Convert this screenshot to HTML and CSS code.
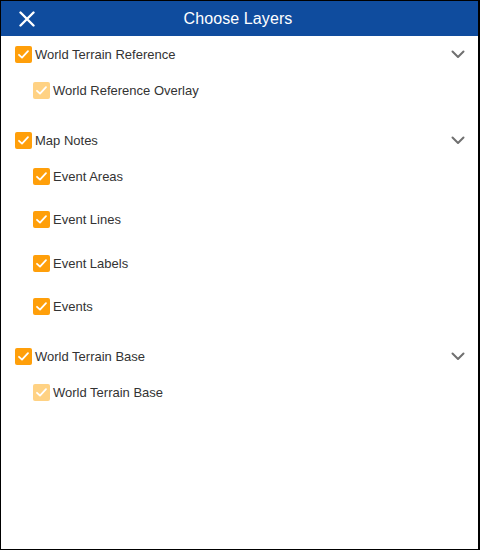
FILE: index.html
```html
<!doctype html>
<html>
	<head>
	<meta charset="utf-8">
	<title>Choose Layers</title>
	<link rel="stylesheet" href="styles.css">
	</head>

	<body>
	<div class="frame">
		<div class="head">
			<div class="head-left">
				<svg class="close" width="16" height="16" viewBox="0 0 16 16"><path d="M1.5 1.5 L14.5 14.5 M14.5 1.5 L1.5 14.5" stroke="#fff" stroke-width="2.4" stroke-linecap="round" fill="none"/></svg>
			</div>
			<div class="title">Choose Layers</div>
			<div></div>
		</div>

		<div class="group">
			<div class="row main">
				<span class="box"><svg width="17" height="17" viewBox="0 0 17 17"><path d="M4 8.8 L7 11.6 L13 5.2" stroke="#fff" stroke-width="1.8" stroke-linecap="round" stroke-linejoin="round" fill="none"/></svg></span>
				<span class="label">World Terrain Reference</span>
				<svg class="chev" width="14" height="9" viewBox="0 0 14 9"><path d="M1.5 1.5 L7 7 L12.5 1.5" stroke="#707070" stroke-width="2" stroke-linecap="round" stroke-linejoin="round" fill="none"/></svg>
			</div>
			<div class="subs">
				<div class="row sub">
					<span class="box light"><svg width="17" height="17" viewBox="0 0 17 17"><path d="M4 8.8 L7 11.6 L13 5.2" stroke="#fff" stroke-width="1.8" stroke-linecap="round" stroke-linejoin="round" fill="none"/></svg></span>
					<span class="label">World Reference Overlay</span>
				</div>
			</div>
		</div>

		<div class="group">
			<div class="row main">
				<span class="box"><svg width="17" height="17" viewBox="0 0 17 17"><path d="M4 8.8 L7 11.6 L13 5.2" stroke="#fff" stroke-width="1.8" stroke-linecap="round" stroke-linejoin="round" fill="none"/></svg></span>
				<span class="label">Map Notes</span>
				<svg class="chev" width="14" height="9" viewBox="0 0 14 9"><path d="M1.5 1.5 L7 7 L12.5 1.5" stroke="#707070" stroke-width="2" stroke-linecap="round" stroke-linejoin="round" fill="none"/></svg>
			</div>
			<div class="subs">
				<div class="row sub">
					<span class="box"><svg width="17" height="17" viewBox="0 0 17 17"><path d="M4 8.8 L7 11.6 L13 5.2" stroke="#fff" stroke-width="1.8" stroke-linecap="round" stroke-linejoin="round" fill="none"/></svg></span>
					<span class="label">Event Areas</span>
				</div>
				<div class="row sub">
					<span class="box"><svg width="17" height="17" viewBox="0 0 17 17"><path d="M4 8.8 L7 11.6 L13 5.2" stroke="#fff" stroke-width="1.8" stroke-linecap="round" stroke-linejoin="round" fill="none"/></svg></span>
					<span class="label">Event Lines</span>
				</div>
				<div class="row sub">
					<span class="box"><svg width="17" height="17" viewBox="0 0 17 17"><path d="M4 8.8 L7 11.6 L13 5.2" stroke="#fff" stroke-width="1.8" stroke-linecap="round" stroke-linejoin="round" fill="none"/></svg></span>
					<span class="label">Event Labels</span>
				</div>
				<div class="row sub">
					<span class="box"><svg width="17" height="17" viewBox="0 0 17 17"><path d="M4 8.8 L7 11.6 L13 5.2" stroke="#fff" stroke-width="1.8" stroke-linecap="round" stroke-linejoin="round" fill="none"/></svg></span>
					<span class="label">Events</span>
				</div>
			</div>
		</div>

		<div class="group">
			<div class="row main">
				<span class="box"><svg width="17" height="17" viewBox="0 0 17 17"><path d="M4 8.8 L7 11.6 L13 5.2" stroke="#fff" stroke-width="1.8" stroke-linecap="round" stroke-linejoin="round" fill="none"/></svg></span>
				<span class="label">World Terrain Base</span>
				<svg class="chev" width="14" height="9" viewBox="0 0 14 9"><path d="M1.5 1.5 L7 7 L12.5 1.5" stroke="#707070" stroke-width="2" stroke-linecap="round" stroke-linejoin="round" fill="none"/></svg>
			</div>
			<div class="subs">
				<div class="row sub">
					<span class="box light"><svg width="17" height="17" viewBox="0 0 17 17"><path d="M4 8.8 L7 11.6 L13 5.2" stroke="#fff" stroke-width="1.8" stroke-linecap="round" stroke-linejoin="round" fill="none"/></svg></span>
					<span class="label">World Terrain Base</span>
				</div>
			</div>
		</div>
	</div>
	</body>
</html>
```

FILE: styles.css
```css
body {
	margin: 0;
	font-family: "Liberation Sans", Arial, sans-serif;
}
.frame {
	width: 480px;
	height: 550px;
	box-sizing: border-box;
	border: 1px solid #000;
	border-right-width: 2px;
	background: #fff;
}
.head {
	height: 35px;
	background: #0f4c9e;
	display: grid;
	grid-template-columns: 1fr auto 1fr;
	align-items: center;
	color: #fff;
}
.head-left {
	display: flex;
	align-items: center;
	padding-left: 18px;
}
.close {
	display: block;
}
.title {
	font-size: 16px;
	letter-spacing: 0.1px;
	margin-right: 3px;
}
.group {
	padding-bottom: 14px;
}
.subs {
	display: flex;
	flex-direction: column;
	gap: 7.5px;
}
.row {
	height: 36px;
	display: flex;
	align-items: center;
	padding-left: 14px;
	padding-right: 13px;
}
.row.sub {
	padding-left: 32px;
}
.box {
	width: 17px;
	height: 17px;
	border-radius: 2px;
	background: #ff9f0a;
	flex: none;
}
.box svg {
	display: block;
}
.box.light {
	background: #ffd284;
}
.label {
	margin-left: 3px;
	font-size: 13px;
	color: #333;
}
.chev {
	margin-left: auto;
	display: block;
}
```
